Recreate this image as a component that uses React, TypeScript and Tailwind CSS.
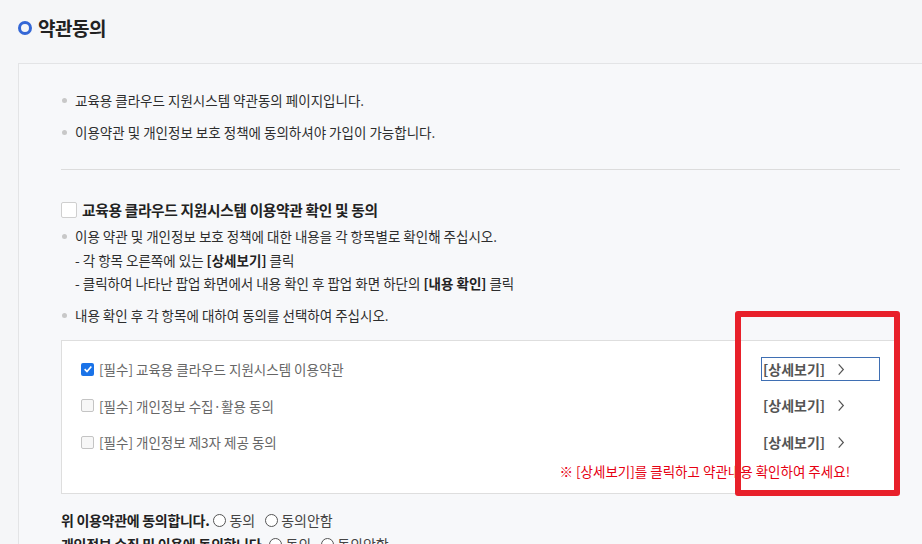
import React from 'react'

const font = { fontFamily: '"Noto Sans CJK KR", "Noto Sans", sans-serif' }

const Bullet: React.FC<{ children: React.ReactNode }> = ({ children }) => (
  <li className="flex items-center">
    <span className="w-[5px] h-[5px] rounded-full bg-[#c8c8c8] mr-[8px]"></span>
    <span>{children}</span>
  </li>
)

const terms = [
  { label: '[필수] 교육용 클라우드 지원시스템 이용약관', checked: true, focused: true },
  { label: '[필수] 개인정보 수집·활용 동의', checked: false, focused: false },
  { label: '[필수] 개인정보 제3자 제공 동의', checked: false, focused: false },
]

const Radio: React.FC<{ label: string; className?: string }> = ({ label, className }) => (
  <label className={'flex items-center ' + (className || '')}>
    <span className="w-[13px] h-[13px] rounded-full border border-[#555] bg-white mr-[3px]"></span>
    <span className="text-[#444] font-normal">{label}</span>
  </label>
)

export default function App() {
  return (
    <div className="relative w-[922px] h-[544px] overflow-hidden bg-[#f5f6f8] text-[#333]" style={font}>
      {/* Title */}
      <div className="flex items-center pl-[18px] pt-[14px] h-[42px]">
        <span className="w-[14px] h-[14px] rounded-full border-[3.5px] border-[#3467d6] mr-[6px]"></span>
        <h1 className="text-[19px] font-bold text-[#222] tracking-[-0.5px]">약관동의</h1>
      </div>

      {/* Card */}
      <div className="ml-[18px] mt-[21px] border-t border-l border-[#e3e4e6] bg-[#f7f8fa] pl-[42px] pr-[22px] pt-[25px]">
        <ul className="text-[13.5px] space-y-[10px] leading-[22px] pl-[1px] text-[#2d2d2d]">
          <Bullet>교육용 클라우드 지원시스템 약관동의 페이지입니다.</Bullet>
          <Bullet>이용약관 및 개인정보 보호 정책에 동의하셔야 가입이 가능합니다.</Bullet>
        </ul>

        <div className="mt-[26px] border-t border-[#dcdcdc]"></div>

        <div className="mt-[29px] flex items-center">
          <span className="w-[16px] h-[16px] border border-[#cfcfcf] bg-white rounded-[2px] mr-[5px]"></span>
          <span className="text-[14.7px] font-bold text-[#222] tracking-[-0.3px]">교육용 클라우드 지원시스템 이용약관 확인 및 동의</span>
        </div>

        <ul className="text-[13.5px] leading-[23.5px] mt-[4px] pl-[1px] text-[#2d2d2d]">
          <Bullet>이용 약관 및 개인정보 보호 정책에 대한 내용을 각 항목별로 확인해 주십시오.</Bullet>
          <li className="pl-[13px]">- 각 항목 오른쪽에 있는 <b className="text-[#222]">[상세보기]</b> 클릭</li>
          <li className="pl-[13px]">- 클릭하여 나타난 팝업 화면에서 내용 확인 후 팝업 화면 하단의 <b className="text-[#222]">[내용 확인]</b> 클릭</li>
          <li className="mt-[8px]">
            <Bullet>내용 확인 후 각 항목에 대하여 동의를 선택하여 주십시오.</Bullet>
          </li>
        </ul>

        {/* Terms box */}
        <div className="mt-[13px] bg-white border border-[#dedede] pl-[19px] pr-[19px] pt-[10px] pb-[12px]">
          {terms.map((t) => (
            <div key={t.label} className="flex items-center justify-between h-[36.5px]">
              <div className="flex items-center text-[13.5px] text-[#666]">
                {t.checked ? (
                  <span className="w-[13px] h-[13px] rounded-[2px] bg-[#1a73e8] flex items-center justify-center mr-[5px]">
                    <svg viewBox="0 0 12 12" className="w-[10px] h-[10px]">
                      <path d="M2 6.2 L4.8 9 L10 3" stroke="white" strokeWidth="2" fill="none" />
                    </svg>
                  </span>
                ) : (
                  <span className="w-[13px] h-[13px] rounded-[2px] border border-[#c4c4c4] bg-[#f7f7f7] mr-[5px]"></span>
                )}
                <span>{t.label}</span>
              </div>
              <div
                className={
                  'flex items-center w-[119px] h-[24px] pl-[1px] ' +
                  (t.focused ? 'border border-[#3f6fb3]' : 'border border-transparent')
                }
              >
                <span className="text-[14px] font-bold text-[#555]">[상세보기]</span>
                <svg viewBox="0 0 8 14" className="w-[8px] h-[13px] ml-[12px]">
                  <path d="M1.5 1.5 L6.5 7 L1.5 12.5" stroke="#555" strokeWidth="1.3" fill="none" />
                </svg>
              </div>
            </div>
          ))}
          <div className="text-right text-[13.5px] text-[#e60012] pr-[30px]">
            ※ [상세보기]를 클릭하고 약관내용 확인하여 주세요!
          </div>
        </div>

        {/* Agree rows */}
        <div className="mt-[15px] text-[14px]">
          <div className="flex items-center h-[24px]">
            <span className="font-bold text-[#222] tracking-[-0.3px] mr-[4px]">위 이용약관에 동의합니다.</span>
            <Radio label="동의" className="mr-[10px]" />
            <Radio label="동의안함" />
          </div>
          <div className="flex items-center h-[24px]">
            <span className="font-bold text-[#222] tracking-[-0.3px] mr-[4px]">개인정보 수집 및 이용에 동의합니다.</span>
            <Radio label="동의" className="mr-[10px]" />
            <Radio label="동의안함" />
          </div>
        </div>
      </div>

      {/* Red annotation box */}
      <div className="absolute left-[735px] top-[311px] w-[165px] h-[185px] border-[6px] border-[#e8202a] rounded-[3px]"></div>
    </div>
  )
}
